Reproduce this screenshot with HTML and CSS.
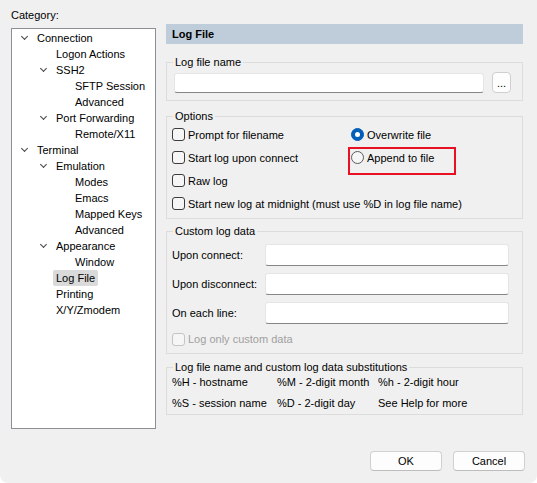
FILE: index.html
```html
<!DOCTYPE html>
<html lang="en">
<head>
    <meta charset="UTF-8">
    <title>Session Options - Log File</title>
    <link rel="stylesheet" href="styles.css">
</head>
<body>
<div class="dialog">
    <div class="main">

        <!-- Category tree -->
        <div class="category">
            <div class="cat-label">Category:</div>
            <div class="tree">
                <div class="node lvl0"><span class="twisty open"></span><span class="text">Connection</span></div>
                <div class="node lvl1"><span class="twisty"></span><span class="text">Logon Actions</span></div>
                <div class="node lvl1"><span class="twisty open"></span><span class="text">SSH2</span></div>
                <div class="node lvl2"><span class="twisty"></span><span class="text">SFTP Session</span></div>
                <div class="node lvl2"><span class="twisty"></span><span class="text">Advanced</span></div>
                <div class="node lvl1"><span class="twisty open"></span><span class="text">Port Forwarding</span></div>
                <div class="node lvl2"><span class="twisty"></span><span class="text">Remote/X11</span></div>
                <div class="node lvl0"><span class="twisty open"></span><span class="text">Terminal</span></div>
                <div class="node lvl1"><span class="twisty open"></span><span class="text">Emulation</span></div>
                <div class="node lvl2"><span class="twisty"></span><span class="text">Modes</span></div>
                <div class="node lvl2"><span class="twisty"></span><span class="text">Emacs</span></div>
                <div class="node lvl2"><span class="twisty"></span><span class="text">Mapped Keys</span></div>
                <div class="node lvl2"><span class="twisty"></span><span class="text">Advanced</span></div>
                <div class="node lvl1"><span class="twisty open"></span><span class="text">Appearance</span></div>
                <div class="node lvl2"><span class="twisty"></span><span class="text">Window</span></div>
                <div class="node lvl1"><span class="twisty"></span><span class="text selected">Log File</span></div>
                <div class="node lvl1"><span class="twisty"></span><span class="text">Printing</span></div>
                <div class="node lvl1"><span class="twisty"></span><span class="text">X/Y/Zmodem</span></div>
            </div>
        </div>

        <!-- Log File page -->
        <div class="page">
            <div class="page-title">Log File</div>

            <fieldset class="group group-name">
                <legend>Log file name</legend>
                <div class="name-row">
                    <input type="text" class="field field-name">
                    <button class="browse">...</button>
                </div>
            </fieldset>

            <fieldset class="group group-options">
                <legend>Options</legend>
                <div class="options-grid">
                    <label class="check"><span class="box"></span>Prompt for filename</label>
                    <label class="radio"><span class="dot on"></span>Overwrite file</label>
                    <label class="check"><span class="box"></span>Start log upon connect</label>
                    <label class="radio marked"><span class="dot"></span>Append to file</label>
                    <label class="check"><span class="box"></span>Raw log</label>
                    <label class="check wide"><span class="box"></span>Start new log at midnight (must use %D in log file name)</label>
                </div>
            </fieldset>

            <fieldset class="group group-custom">
                <legend>Custom log data</legend>
                <div class="custom-body">
                    <div class="custom-grid">
                        <span class="field-label">Upon connect:</span>
                        <input type="text" class="field">
                        <span class="field-label">Upon disconnect:</span>
                        <input type="text" class="field">
                        <span class="field-label">On each line:</span>
                        <input type="text" class="field">
                    </div>
                    <label class="check disabled custom-only"><span class="box"></span>Log only custom data</label>
                </div>
            </fieldset>

            <fieldset class="group group-subst">
                <legend>Log file name and custom log data substitutions</legend>
                <div class="subst-grid">
                    <span>%H - hostname</span>
                    <span>%M - 2-digit month</span>
                    <span>%h - 2-digit hour</span>
                    <span>%S - session name</span>
                    <span>%D - 2-digit day</span>
                    <span>See Help for more</span>
                </div>
            </fieldset>
        </div>
    </div>

    <div class="buttons">
        <button class="btn">OK</button>
        <button class="btn">Cancel</button>
    </div>
</div>
</body>
</html>
```

FILE: styles.css
```css
* {
    margin: 0;
    padding: 0;
    box-sizing: border-box;
}

html {
    background: #ffffff;
}

body {
    font-family: "Liberation Sans", Arial, sans-serif;
    font-size: 11px;
    color: #000;
}

.dialog {
    width: 537px;
    height: 483px;
    background: #f0f0f0;
    border-radius: 0 0 8px 8px;
    overflow: hidden;
}

.main {
    display: flex;
    align-items: flex-start;
    gap: 10px;
    padding: 0 15px 0 11px;
}

/* Category tree */
.category {
    width: 145px;
    flex-shrink: 0;
}

.cat-label {
    line-height: 14px;
    margin-top: 8px;
    margin-bottom: 6px;
}

.tree {
    height: 401px;
    background: #fff;
    border: 1px solid #8c8f96;
    padding-top: 1px;
}

.node {
    display: flex;
    align-items: center;
    height: 16px;
    line-height: 16px;
    padding-left: 6px;
    white-space: nowrap;
}

.node.lvl1 { padding-left: 25px; }
.node.lvl2 { padding-left: 44px; }

.twisty {
    width: 19px;
    height: 16px;
    flex-shrink: 0;
    position: relative;
}

.twisty.open::before {
    content: '';
    position: absolute;
    left: 4px;
    top: 4px;
    width: 4px;
    height: 4px;
    border-right: 1px solid #444;
    border-bottom: 1px solid #444;
    transform: rotate(45deg);
}

.text.selected {
    background: #dadada;
    border-radius: 2px;
    padding: 0 3px;
    margin-left: -3px;
}

/* Page */
.page {
    width: 357px;
}

.page-title {
    margin-top: 24px;
    height: 20px;
    line-height: 20px;
    background: #bfcddb;
    padding-left: 6px;
    font-weight: bold;
}

.group {
    border: 1px solid #dcdcdc;
    padding: 0;
    min-width: 0;
}

.group legend {
    line-height: 14px;
    margin-left: 6px;
    padding: 0 2px;
}

.group-name {
    margin-top: 11px;
}

.name-row {
    display: flex;
    align-items: center;
    gap: 8px;
    padding: 3px 11px 7px 7px;
}

.field {
    height: 22px;
    background: #fff;
    border: 1px solid #e5e5e5;
    border-bottom-color: #868686;
    border-radius: 3px;
    outline: none;
    font: inherit;
}

.field-name {
    width: 311px;
    height: 20px;
}

.browse {
    width: 19px;
    height: 21px;
    background: #fdfdfd;
    border: 1px solid #cfcfcf;
    border-radius: 4px;
    font: inherit;
    line-height: 21px;
    color: #000;
}

.group-options {
    margin-top: 8px;
}

.options-grid {
    display: grid;
    grid-template-columns: 179px 1fr;
    grid-auto-rows: 23px;
    padding: 0 5px 3px 5px;
}

.check,
.radio {
    display: flex;
    align-items: center;
    white-space: nowrap;
}

.check.wide {
    grid-column: 1 / 3;
}

.box {
    width: 13px;
    height: 13px;
    border: 1px solid #3c3c3c;
    border-radius: 3px;
    background: #f6f6f6;
    margin-right: 3px;
    flex-shrink: 0;
}

.dot {
    width: 13px;
    height: 13px;
    border: 1px solid #5a5a5a;
    border-radius: 50%;
    background: #f6f6f6;
    margin-right: 3px;
    flex-shrink: 0;
    position: relative;
}

.dot.on {
    background: #005fb8;
    border-color: #005fb8;
}

.dot.on::after {
    content: '';
    position: absolute;
    left: 3px;
    top: 3px;
    width: 5px;
    height: 5px;
    border-radius: 50%;
    background: #fff;
}

/* red annotation box */
.radio.marked {
    position: relative;
}

.radio.marked::after {
    content: '';
    position: absolute;
    left: -3px;
    top: 1px;
    width: 104px;
    height: 24px;
    border: 2px solid #e81123;
}

.group-custom {
    margin-top: 5px;
}

.custom-body {
    padding: 6px 13px 6px 5px;
}

.custom-grid {
    display: grid;
    grid-template-columns: 93px 1fr;
    row-gap: 7px;
    align-items: center;
}

.check.disabled {
    color: #a0a0a0;
}

.check.disabled .box {
    border-color: #c4c4c4;
}

.custom-only {
    margin-top: 7px;
    height: 16px;
}

.group-subst {
    margin-top: 6px;
}

.subst-grid {
    display: grid;
    grid-template-columns: 105px 101px auto;
    grid-auto-rows: 16px;
    row-gap: 5px;
    line-height: 16px;
    white-space: nowrap;
    padding: 0 5px 3px 5px;
}

/* Bottom buttons */
.buttons {
    display: flex;
    justify-content: flex-end;
    gap: 11px;
    padding-right: 12px;
    margin-top: 22px;
}

.btn {
    width: 72px;
    height: 20px;
    background: #fdfdfd;
    border: 1px solid #d0d0d0;
    border-bottom-color: #bdbdbd;
    border-radius: 4px;
    font: inherit;
    color: #000;
}
```
